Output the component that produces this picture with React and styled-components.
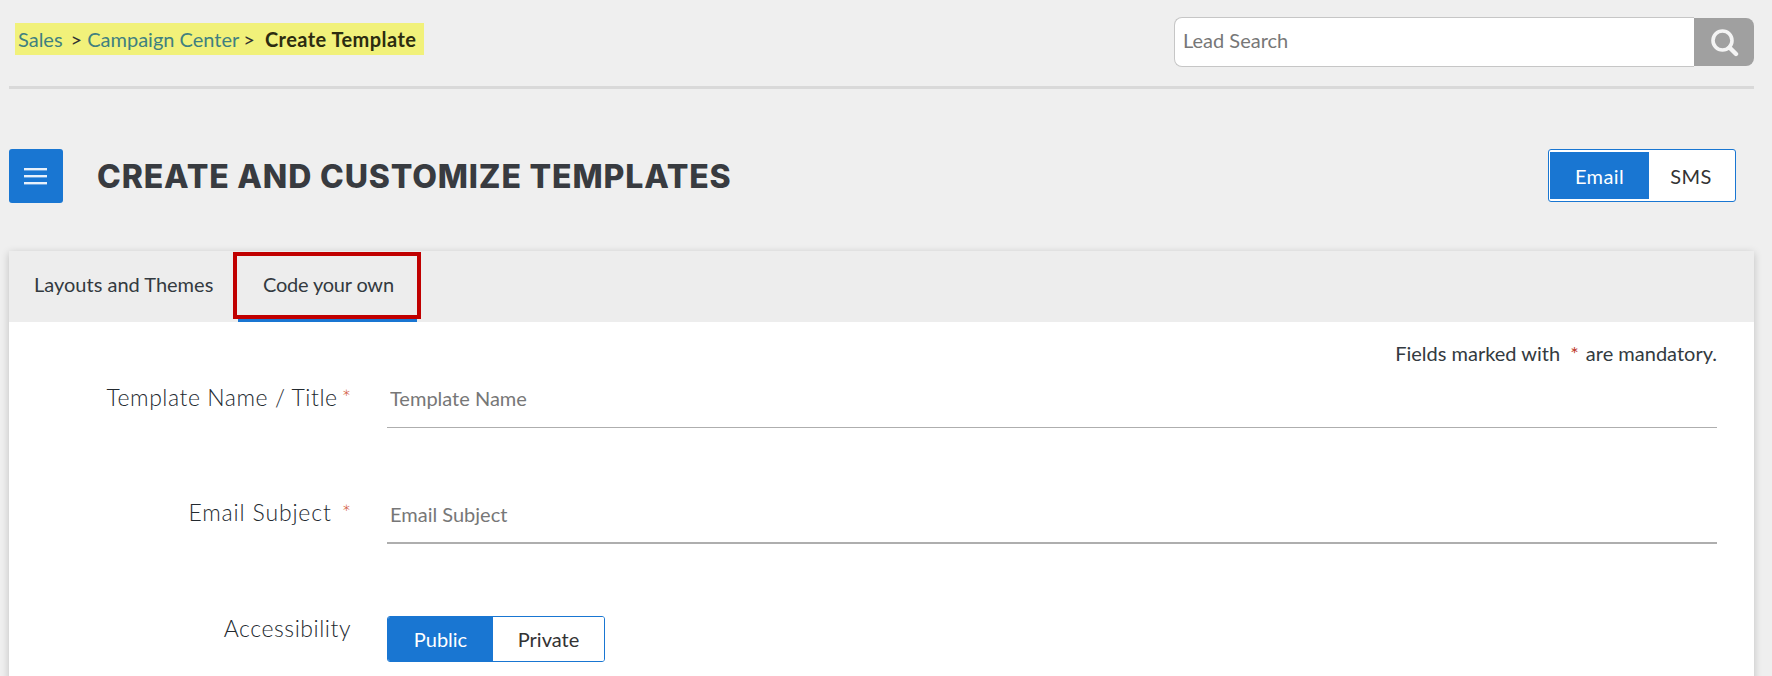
import React from "react";
import styled, { createGlobalStyle } from "styled-components";

const FONT = `"Lato", "Noto Sans", "Liberation Sans", sans-serif`;

const GlobalStyle = createGlobalStyle`
    html, body {
        margin: 0;
        padding: 0;
        height: 100%;
        overflow: hidden;
        background: #efefef;
    }
    body {
        font-family: ${FONT};
        color: #333a40;
    }
    * {
        box-sizing: border-box;
    }
`;

function App() {
    return (
        <>
            <GlobalStyle />
            <Page>
                <Header>
                    <Breadcrumb>
                        <CrumbLink>Sales</CrumbLink>
                        <Sep $left={8}>&gt;</Sep>
                        <CrumbLink $left={5}>Campaign Center</CrumbLink>
                        <Sep $left={4}>&gt;</Sep>
                        <Current>Create Template</Current>
                    </Breadcrumb>
                    <SearchBox>
                        <SearchInput placeholder="Lead Search" />
                        <SearchButton>
                            <svg width="30" height="30" viewBox="0 0 30 30" fill="none">
                                <circle cx="13.5" cy="13.5" r="9.5" stroke="#f4f4f4" strokeWidth="3.6" />
                                <path d="M20.5 20.5L27 27" stroke="#f4f4f4" strokeWidth="4.4" strokeLinecap="round" />
                            </svg>
                        </SearchButton>
                    </SearchBox>
                </Header>
                <TitleBar>
                    <MenuButton>
                        <svg width="24" height="18" viewBox="0 0 24 18" fill="#e8f1fb">
                            <rect x="0" y="1" width="23" height="2.4" />
                            <rect x="0" y="8" width="23" height="2.4" />
                            <rect x="0" y="15" width="23" height="2.4" />
                        </svg>
                    </MenuButton>
                    <Title>CREATE AND CUSTOMIZE TEMPLATES</Title>
                    <ChannelToggle>
                        <ChannelOption $active>Email</ChannelOption>
                        <ChannelOption>SMS</ChannelOption>
                    </ChannelToggle>
                </TitleBar>
                <Card>
                    <Tabs>
                        <Tab>Layouts and Themes</Tab>
                        <ActiveTab>
                            Code your own
                            <Highlight />
                        </ActiveTab>
                    </Tabs>
                    <Body>
                        <Note>
                            Fields marked with <NoteStar>*</NoteStar> are mandatory.
                        </Note>
                        <Row $top={14}>
                            <Label $shift={2}>
                                Template Name / Title<Star $left={4}>*</Star>
                            </Label>
                            <TextField placeholder="Template Name" />
                        </Row>
                        <Row $top={62}>
                            <Label $shift={6} $track={0.85}>
                                Email Subject<Star $left={10}>*</Star>
                            </Label>
                            <TextField $thick placeholder="Email Subject" />
                        </Row>
                        <Row $top={72}>
                            <Label $shift={-4}>Accessibility</Label>
                            <AccessToggle>
                                <AccessOption $active>Public</AccessOption>
                                <AccessOption>Private</AccessOption>
                            </AccessToggle>
                        </Row>
                    </Body>
                </Card>
            </Page>
        </>
    );
}

export default App;

const Page = styled.div`
    padding: 0 18px 0 9px;
`;
const Header = styled.div`
    height: 89px;
    border-bottom: 3px solid #d9d9d9;
    display: flex;
    justify-content: space-between;
    padding-top: 17px;
`;
const Breadcrumb = styled.div`
    height: 32px;
    margin: 6px 0 0 6px;
    padding: 0 8px 0 3px;
    background: #f1f17a;
    display: flex;
    align-items: center;
    font-size: 20px;
    white-space: nowrap;
`;
const CrumbLink = styled.span`
    color: #3f8080;
    margin-left: ${(p) => p.$left || 0}px;
`;
const Sep = styled.span`
    color: #333;
    margin-left: ${(p) => p.$left || 0}px;
`;
const Current = styled.span`
    color: #2c2c10;
    font-weight: 700;
    letter-spacing: 0.45px;
    margin-left: 10px;
`;
const SearchBox = styled.div`
    width: 580px;
    height: 50px;
    display: flex;
`;
const SearchInput = styled.input`
    flex: 1;
    min-width: 0;
    height: 50px;
    border: 1px solid #c6c6c6;
    border-right: none;
    border-radius: 8px 0 0 8px;
    background: #fff;
    padding: 0 8px 5px;
    font-family: ${FONT};
    font-size: 20px;
    outline: none;
    &::placeholder {
        color: #777;
        opacity: 1;
    }
`;
const SearchButton = styled.div`
    width: 60px;
    height: 48px;
    margin-top: 1px;
    background: #a0a0a0;
    border-radius: 0 8px 8px 0;
    display: flex;
    align-items: center;
    justify-content: center;
`;
const TitleBar = styled.div`
    height: 162px;
    padding: 60px 18px 0 0;
    display: flex;
    align-items: flex-start;
`;
const MenuButton = styled.div`
    width: 54px;
    height: 54px;
    background: #1976d2;
    border-radius: 3px;
    display: flex;
    align-items: center;
    justify-content: center;
`;
const Title = styled.h1`
    flex: 1;
    margin: 1px 0 0 34px;
    line-height: 54px;
    font-family: "Inter", ${FONT};
    font-size: 32px;
    font-weight: 800;
    letter-spacing: 0.85px;
    color: #383b40;
    white-space: nowrap;
`;
const ChannelToggle = styled.div`
    width: 188px;
    height: 53px;
    padding: 2px 2px 2px 1px;
    background: #fff;
    border: 1px solid #1976d2;
    border-radius: 3px;
    display: flex;
`;
const ChannelOption = styled.div`
    flex: ${(p) => (p.$active ? "0 0 99px" : "1")};
    display: flex;
    align-items: center;
    justify-content: center;
    font-size: 20px;
    letter-spacing: 0.4px;
    background: ${(p) => (p.$active ? "#1976d2" : "#fff")};
    color: ${(p) => (p.$active ? "#fff" : "#333")};
`;
const Card = styled.div`
    background: #fff;
    box-shadow: 0 2px 8px rgba(0, 0, 0, 0.2);
    height: 600px;
`;
const Tabs = styled.div`
    height: 71px;
    background: #ededed;
    display: flex;
`;
const Tab = styled.div`
    width: 224px;
    padding-left: 25px;
    line-height: 67px;
    font-size: 20px;
    color: #333a40;
`;
const ActiveTab = styled.div`
    position: relative;
    width: 188px;
    height: 67px;
    margin-top: 1px;
    border: 4px solid #c00000;
    line-height: 56px;
    padding-left: 26px;
    font-size: 20px;
    letter-spacing: -0.2px;
    color: #333a40;
`;
const Highlight = styled.div`
    position: absolute;
    left: 1px;
    right: 0;
    bottom: -7px;
    height: 3px;
    background: #1976d2;
`;
const Body = styled.div`
    padding: 19px 37px 0 0;
`;
const Note = styled.div`
    text-align: right;
    font-size: 20px;
    line-height: 24px;
    color: #333a40;
`;
const NoteStar = styled.span`
    color: #c0392b;
    margin: 0 2px 0 5px;
`;
const Row = styled.div`
    margin-top: ${(p) => p.$top}px;
    display: grid;
    grid-template-columns: 342px 1fr;
    column-gap: 36px;
    align-items: start;
`;
const Label = styled.div`
    margin-top: ${(p) => p.$shift}px;
    text-align: right;
    font-size: 23px;
    font-weight: 300;
    letter-spacing: ${(p) => p.$track || 0.55}px;
    line-height: 32px;
    color: #23292f;
`;
const Star = styled.span`
    color: #d2593a;
    font-size: 22px;
    letter-spacing: 0;
    margin-left: ${(p) => p.$left}px;
`;
const TextField = styled.input`
    width: 100%;
    height: ${(p) => (p.$thick ? "54px" : "49px")};
    border: none;
    border-bottom: ${(p) => (p.$thick ? 2 : 1)}px solid #aeaeae;
    padding: ${(p) => (p.$thick ? "0 3px 4px" : "0 3px 11px")};
    font-family: ${FONT};
    font-size: 20px;
    outline: none;
    &::placeholder {
        color: #777;
        opacity: 1;
    }
`;
const AccessToggle = styled.div`
    width: 218px;
    height: 46px;
    background: #fff;
    border: 1px solid #1976d2;
    border-radius: 3px;
    display: flex;
    overflow: hidden;
`;
const AccessOption = styled.div`
    flex: ${(p) => (p.$active ? "0 0 105px" : "1")};
    display: flex;
    align-items: center;
    justify-content: center;
    font-size: 20px;
    background: ${(p) => (p.$active ? "#1976d2" : "#fff")};
    color: ${(p) => (p.$active ? "#fff" : "#333")};
`;
